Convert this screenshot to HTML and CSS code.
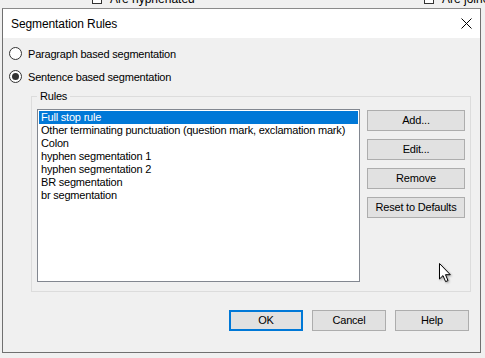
FILE: index.html
```html
<!DOCTYPE html>
<html>
<head>
<meta charset="utf-8">
<title>Segmentation Rules</title>
<link rel="stylesheet" href="styles.css">
</head>
<body>
<div class="backdrop">
  <div class="bd-item bd-left"><span class="bd-box"></span><span>Are hyphenated</span></div>
  <div class="bd-item bd-right"><span class="bd-box"></span><span>Are joined</span></div>
</div>
<div class="dialog">
  <div class="titlebar">
    <span class="title">Segmentation Rules</span>
    <svg class="close" width="11" height="11" viewBox="0 0 11 11"><path d="M0.5 0.5 L10.5 10.5 M10.5 0.5 L0.5 10.5" stroke="#000" stroke-width="1" fill="none"/></svg>
  </div>
  <div class="body">
    <label class="radio"><span class="circle"></span>Paragraph based segmentation</label>
    <label class="radio"><span class="circle checked"></span>Sentence based segmentation</label>
    <fieldset class="group">
      <legend>Rules</legend>
      <div class="group-inner">
        <ul class="list">
          <li class="selected">Full stop rule</li>
          <li>Other terminating punctuation (question mark, exclamation mark)</li>
          <li>Colon</li>
          <li>hyphen segmentation 1</li>
          <li>hyphen segmentation 2</li>
          <li>BR segmentation</li>
          <li>br segmentation</li>
        </ul>
        <div class="side-buttons">
          <button class="btn">Add...</button>
          <button class="btn">Edit...</button>
          <button class="btn">Remove</button>
          <button class="btn">Reset to Defaults</button>
        </div>
      </div>
    </fieldset>
    <div class="footer">
      <button class="btn btn-foot btn-default">OK</button>
      <button class="btn btn-foot">Cancel</button>
      <button class="btn btn-foot">Help</button>
    </div>
  </div>
  <svg class="cursor" width="16" height="22" viewBox="0 0 16 22">
    <path d="M1.5 1.5 L1.5 17 L5 13.6 L7.6 19.6 L10 18.6 L7.5 12.7 L12.3 12.7 Z" fill="#fff" stroke="#000" stroke-width="1" stroke-linejoin="miter"/>
  </svg>
</div>
</body>
</html>
```

FILE: styles.css
```css
* { box-sizing: border-box; }

html, body {
  margin: 0;
  padding: 0;
}

body {
  width: 485px;
  height: 358px;
  overflow: hidden;
  background: #f0f0f0;
  font-family: "Liberation Sans", Arial, sans-serif;
  font-size: 11px;
  letter-spacing: -0.2px;
  color: #000;
}

.backdrop {
  height: 8px;
  overflow: hidden;
  display: flex;
  padding-left: 92px;
  color: #000;
}

.bd-item {
  display: flex;
  align-items: center;
  gap: 8px;
  margin-top: -8px;
  height: 14px;
  white-space: nowrap;
  font-size: 12px;
  letter-spacing: 0;
  flex: none;
}

.bd-left { width: 332px; }

.bd-box {
  width: 10px;
  height: 10px;
  border: 1px solid #333;
  background: #fff;
}

.dialog {
  position: relative;
  margin-left: 2px;
  width: 479px;
  height: 345px;
  border: 1px solid #707070;
  border-top-color: #8a8a8a;
  background: #f0f0f0;
  display: flex;
  flex-direction: column;
}

.titlebar {
  height: 29px;
  background: #fff;
  display: flex;
  align-items: center;
  justify-content: space-between;
  padding: 0 8px 0 8px;
}

.title {
  font-size: 12px;
  letter-spacing: -0.1px;
  line-height: 14px;
}

.close { display: block; }

.body {
  flex: 1;
  padding-top: 4px;
  display: flex;
  flex-direction: column;
}

.radio {
  height: 23px;
  display: flex;
  align-items: center;
  gap: 6px;
  padding-left: 6px;
  line-height: 14px;
}

.circle {
  width: 13px;
  height: 13px;
  border-radius: 50%;
  border: 1px solid #333;
  background: #fff;
  display: flex;
  align-items: center;
  justify-content: center;
}

.circle.checked::after {
  content: "";
  width: 7px;
  height: 7px;
  border-radius: 50%;
  background: #333;
}

.group {
  margin: 2px 9px 0 28px;
  padding: 0 5px 9px 5px;
  border: 1px solid #dcdcdc;
  min-width: 0;
}

.group legend {
  padding: 0 3px;
  line-height: 13px;
}

.group-inner {
  display: flex;
  gap: 7px;
  padding-top: 6px;
}

.list {
  list-style: none;
  margin: 0;
  width: 323px;
  flex: none;
  height: 173px;
  border: 1px solid #828790;
  background: #fff;
  padding: 1px;
}

.list li {
  line-height: 13px;
  padding-left: 2px;
  white-space: nowrap;
}

.list li.selected {
  background: #0078d7;
  color: #fff;
}

.side-buttons {
  display: flex;
  flex-direction: column;
  gap: 8px;
  padding-top: 1px;
}

.btn {
  font-family: "Liberation Sans", Arial, sans-serif;
  font-size: 11px;
  letter-spacing: -0.2px;
  color: #000;
  width: 98px;
  height: 21px;
  padding: 0;
  background: #e1e1e1;
  border: 1px solid #adadad;
  border-radius: 0;
  line-height: 19px;
}

.footer {
  display: flex;
  justify-content: flex-end;
  gap: 9px;
  padding-right: 11px;
  margin-top: 18px;
}

.btn-foot { width: 74px; }

.btn-default {
  border: 2px solid #0078d7;
  line-height: 17px;
}

.cursor {
  position: absolute;
  left: 435px;
  top: 253px;
  filter: drop-shadow(1px 1px 1px rgba(0,0,0,0.35));
}
```
